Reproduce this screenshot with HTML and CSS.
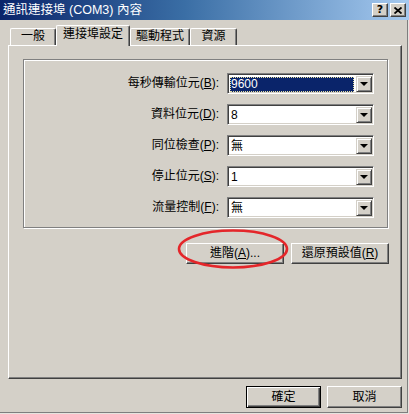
FILE: index.html
```html
<!DOCTYPE html>
<html lang="zh-Hant">
<head>
<meta charset="utf-8">
<title>通訊連接埠 (COM3) 內容</title>
<link rel="stylesheet" href="styles.css">
</head>
<body>
<div class="window">
  <div class="titlebar">
    <span class="title">通訊連接埠 (COM3) 內容</span>
    <div class="tbtns">
      <span class="tbtn q">?</span>
      <span class="tbtn"><svg width="8" height="7" viewBox="0 0 8 7"><path d="M0.5 0.5 L7.5 6.5 M7.5 0.5 L0.5 6.5" stroke="#000" stroke-width="1.8" fill="none"/></svg></span>
    </div>
  </div>
  <div class="content">
    <div class="tabs">
      <div class="tab t1">一般</div>
      <div class="tab sel t2">連接埠設定</div>
      <div class="tab t3">驅動程式</div>
      <div class="tab t4">資源</div>
    </div>
    <div class="panel">
      <div class="group">
        <label>每秒傳輸位元(<u>B</u>):</label>
        <div class="combo"><span class="val focus">9600</span><span class="drop"><i></i></span></div>
        <label>資料位元(<u>D</u>):</label>
        <div class="combo"><span class="val">8</span><span class="drop"><i></i></span></div>
        <label>同位檢查(<u>P</u>):</label>
        <div class="combo"><span class="val">無</span><span class="drop"><i></i></span></div>
        <label>停止位元(<u>S</u>):</label>
        <div class="combo"><span class="val">1</span><span class="drop"><i></i></span></div>
        <label>流量控制(<u>F</u>):</label>
        <div class="combo"><span class="val">無</span><span class="drop"><i></i></span></div>
      </div>
      <div class="btnrow">
        <button class="btn">進階(<u>A</u>)...</button>
        <button class="btn">還原預設值(<u>R</u>)</button>
      </div>
    </div>
    <div class="footer">
      <button class="btn default">確定</button>
      <button class="btn">取消</button>
    </div>
  </div>
  <svg class="mark" width="116" height="44" viewBox="0 0 116 44"><ellipse cx="58" cy="22" rx="54" ry="18.5" fill="none" stroke="#e4262a" stroke-width="2.6"/></svg>
</div>
</body>
</html>
```
FILE: styles.css
```css
* { box-sizing: border-box; }
html, body { margin: 0; padding: 0; }
body {
  width: 409px;
  height: 414px;
  overflow: hidden;
  background: #d4d0c8;
  font-family: "Liberation Sans", "Noto Sans CJK TC", sans-serif;
  font-size: 12px;
  color: #000;
}
.window {
  position: relative;
  width: 409px;
  height: 414px;
  background: #d4d0c8;
  box-shadow: inset -1px -1px 0 #e6e4df, inset -2px -2px 0 #7e7e7e;
}
.titlebar {
  height: 20px;
  display: flex;
  align-items: center;
  padding-left: 3px;
  padding-right: 3px;
  background: linear-gradient(to right, #0a246a 0%, #3a6ea5 45%, #a6caf0 100%);
}
.title {
  color: #fff;
  font-size: 12.5px;
  line-height: 20px;
  white-space: nowrap;
}
.tbtns {
  margin-left: auto;
  display: flex;
  gap: 2px;
}
.tbtn {
  width: 16px;
  height: 14px;
  display: flex;
  align-items: center;
  justify-content: center;
  background: #d4d0c8;
  border-top: 1px solid #fff;
  border-left: 1px solid #fff;
  border-right: 1px solid #404040;
  border-bottom: 1px solid #404040;
  box-shadow: inset -1px -1px 0 #808080;
  font-family: "DejaVu Sans", sans-serif;
  font-weight: bold;
  font-size: 11px;
  line-height: 12px;
}
.content {
  padding: 5px 7px 0 8px;
}
.tabs {
  display: flex;
  align-items: flex-end;
  height: 20px;
  padding-left: 2px;
}
.tab {
  height: 17px;
  border-top: 1px solid #fff;
  border-left: 1px solid #fff;
  border-right: 1px solid #404040;
  box-shadow: inset -1px 0 0 #808080;
  border-top-left-radius: 2px;
  border-top-right-radius: 2px;
  text-align: center;
  line-height: 15px;
  white-space: nowrap;
}
.t1 { width: 46px; }
.t2 { width: 74px; }
.t3 { width: 60px; }
.t4 { width: 47px; }
.tab.sel {
  position: relative;
  z-index: 1;
  height: 21px;
  margin-bottom: -1px;
  background: #d4d0c8;
  line-height: 16px;
}
.panel {
  height: 334px;
  border-top: 1px solid #fff;
  border-left: 1px solid #fff;
  border-right: 1px solid #404040;
  border-bottom: 1px solid #404040;
  box-shadow: inset -1px -1px 0 #808080;
  padding: 13px 13px 0 14px;
}
.group {
  height: 169px;
  border: 1px solid #808080;
  box-shadow: inset 1px 1px 0 #fff, 1px 1px 0 #fff;
  padding: 13px 13px 0 0;
  display: grid;
  grid-template-columns: 1fr 147px;
  grid-auto-rows: 21px;
  column-gap: 8px;
  row-gap: 10px;
}
.group label {
  text-align: right;
  line-height: 21px;
  white-space: nowrap;
}
.combo {
  display: flex;
  align-items: center;
  height: 21px;
  background: #fff;
  border-top: 1px solid #808080;
  border-left: 1px solid #808080;
  border-right: 1px solid #fff;
  border-bottom: 1px solid #fff;
  box-shadow: inset 1px 1px 0 #404040, inset -1px -1px 0 #d4d0c8;
  padding: 2px 1px 1px 2px;
}
.val {
  flex: 1;
  height: 15px;
  line-height: 15px;
  padding-left: 1px;
  margin-right: 2px;
}
.val.focus {
  background: #0a246a;
  color: #fff;
  outline: 1px dotted #e8e0a0;
  outline-offset: -1px;
}
.drop {
  width: 16px;
  height: 16px;
  margin-top: -1px;
  display: flex;
  align-items: center;
  justify-content: center;
  background: #d4d0c8;
  border-top: 1px solid #d4d0c8;
  border-left: 1px solid #d4d0c8;
  border-right: 1px solid #404040;
  border-bottom: 1px solid #404040;
  box-shadow: inset 1px 1px 0 #fff, inset -1px -1px 0 #808080;
}
.drop i {
  width: 0;
  height: 0;
  border-left: 4px solid transparent;
  border-right: 4px solid transparent;
  border-top: 4px solid #000;
}
.btnrow {
  display: flex;
  justify-content: flex-end;
  gap: 7px;
  margin-top: 15px;
  margin-right: -1px;
}
.btn {
  width: 98px;
  height: 21px;
  padding: 0;
  margin: 0;
  font-family: "Liberation Sans", "Noto Sans CJK TC", sans-serif;
  font-size: 12px;
  color: #000;
  background: #d4d0c8;
  border-top: 1px solid #fff;
  border-left: 1px solid #fff;
  border-right: 1px solid #404040;
  border-bottom: 1px solid #404040;
  box-shadow: inset -1px -1px 0 #808080;
  line-height: 17px;
  white-space: nowrap;
}
.footer {
  display: flex;
  justify-content: flex-end;
  gap: 6px;
  margin-top: 7px;
}
.footer .btn {
  width: 75px;
  height: 22px;
}
.btn.default {
  border: 1px solid #000;
  box-shadow: inset 1px 1px 0 #fff, inset -1px -1px 0 #404040, inset -2px -2px 0 #808080;
}
.mark {
  position: absolute;
  left: 175px;
  top: 227px;
}
```
